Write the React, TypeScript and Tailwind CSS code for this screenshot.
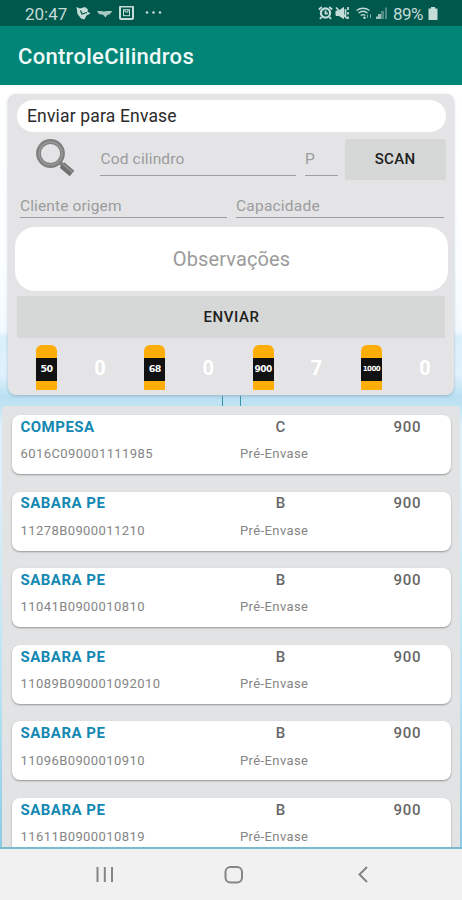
import React from "react";

type Cylinder = { size: string; count: number; label: string };
type Row = { client: string; code: string; type: string };

const cylinders: Cylinder[] = [
  { size: "50", count: 0, label: "text-[9.5px]" },
  { size: "68", count: 0, label: "text-[9.5px]" },
  { size: "900", count: 7, label: "text-[9px]" },
  { size: "1000", count: 0, label: "text-[7px]" },
];

const rows: Row[] = [
  { client: "COMPESA", code: "6016C090001111985", type: "C" },
  { client: "SABARA PE", code: "11278B0900011210", type: "B" },
  { client: "SABARA PE", code: "11041B0900010810", type: "B" },
  { client: "SABARA PE", code: "11089B090001092010", type: "B" },
  { client: "SABARA PE", code: "11096B0900010910", type: "B" },
  { client: "SABARA PE", code: "11611B0900010819", type: "B" },
];

function StatusBar() {
  return (
    <div className="flex h-[26px] shrink-0 items-center bg-[#00574b] pt-[2px] pl-[25px] text-[#c5dcd8]">
      <span className="w-[51px] text-[17px] leading-none whitespace-nowrap">20:47</span>
      <svg className="h-[16px] w-[87px]" viewBox="0 0 87 16" fill="none">
        <path d="M0.500 1 L4 2.500 L9 1 L12 3.500 L11.500 5.500 L14.500 7.500 L10.500 9.500 L8.500 13.500 L5 12.500 L1.500 8 Z" fill="#c5dcd8" />
        <path d="M4.500 4.500 L6 8 L11 6.500" stroke="#00574b" strokeWidth="1.2" />
        <path d="M21 5h4l3 .5l3 -.5h5.500l-3 3.500l-2 .3l-2 2.700l-2.500 -2.800l-4 -.8Z" fill="#c5dcd8" opacity=".85" />
        <rect x="44" y="0.500" width="13" height="12.500" rx="1" stroke="#c5dcd8" strokeWidth="2" />
        <rect x="47.500" y="3.700" width="6" height="6" stroke="#c5dcd8" strokeWidth="1" />
        <path d="M49 4v2h3V4" stroke="#c5dcd8" />
        <circle cx="71" cy="6.500" r="1.300" fill="#c5dcd8" />
        <circle cx="77.500" cy="6.500" r="1.300" fill="#c5dcd8" />
        <circle cx="84" cy="6.500" r="1.300" fill="#c5dcd8" />
      </svg>
      <svg className="ml-[155px] h-[16px] w-[71px]" viewBox="0 0 71 16" fill="none" stroke="#c5dcd8">
        <circle cx="7.500" cy="7" r="4.600" strokeWidth="2.200" />
        <path d="M7.500 4.500v3h2.300M0.800 3.500l3-2.500M11.200 1l3 2.500M3.500 11L2 13M11.500 11l1.500 2" strokeWidth="1.800" />
        <path d="M18 5h3l4.500-3.500v11l-4.500-3H18Z" fill="#c5dcd8" />
        <path d="M18 1.500l11 11M27.500 3v8M30 1v3M30 6v2.500M30 10.500v2.500" strokeWidth="1.700" />
        <path d="M38.500 4.500q6.500-4.500 13 0M40.500 7q4.500-3.500 9 0M42.700 9.500q2.300-1.700 4.600 0" strokeWidth="1.400" />
        <circle cx="46.500" cy="11.700" r="1.200" fill="#c5dcd8" stroke="none" />
        <path d="M49.500 12V8.500M52.500 8v4" strokeWidth="1.100" opacity=".6" />
        <path d="M58 13h2v-2.500h-2ZM60 13h3V8h-3Z" fill="#9dbfba" stroke="none" />
        <path d="M63 13h3V5h-3ZM67 13h2V1.500h-2Z" fill="#4f8c83" stroke="none" />
      </svg>
      <span className="ml-[4px] w-[34px] text-[17px] leading-none tracking-[-0.500px] whitespace-nowrap">89%</span>
      <svg className="ml-[1px] h-[14px] w-[10px]" viewBox="0 0 10 14">
        <path d="M3 0h4v1.500h2.500v11.500h-9V1.500H3Z" fill="#c5dcd8" />
      </svg>
    </div>
  );
}

function SearchIcon() {
  return (
    <svg className="ml-[28px] h-[40px] w-[40px]" viewBox="0 0 40 40" fill="none">
      <path d="M23 22.500L27 26.500" stroke="#808080" strokeWidth="4" />
      <path d="M26 26L36 34.500" stroke="#707070" strokeWidth="7" strokeLinejoin="round" />
      <path d="M27 25L36.500 33" stroke="#8e8e8e" strokeWidth="2" />
      <circle cx="14.500" cy="14.500" r="12" stroke="#808080" strokeWidth="4.800" />
      <circle cx="14.500" cy="14.500" r="11.400" stroke="#999" strokeWidth="1.500" />
    </svg>
  );
}

function Field({ label, className }: { label: string; className: string }) {
  return (
    <div className={`border-b-[1.5px] border-[#9d9fa0] text-[#9b9c9d] whitespace-nowrap ${className}`}>
      {label}
    </div>
  );
}

function CylinderIcon({ size, label }: { size: string; label: string }) {
  return (
    <div className="flex h-[45px] w-[21px] shrink-0 flex-col overflow-hidden rounded-t-[6px] rounded-b-[1px] bg-[#ffad08] pt-[13px]">
      <div
        className={`flex h-[23px] items-center justify-center bg-[#111] font-['DejaVu_Sans',sans-serif] font-bold tracking-[-0.500px] text-white ${label}`}
      >
        {size}
      </div>
    </div>
  );
}

function EnvasePanel() {
  return (
    <section className="mx-[8px] mt-[9px] h-[301px] shrink-0 rounded-[8px] bg-[#e4e4e6] pt-[6px] shadow-[0_1px_3px_rgba(70,100,120,0.35)]">
      <div className="mr-[8px] ml-[9px] flex h-[32px] items-center rounded-full bg-white pl-[10px] text-[17.500px] tracking-[0.170px] text-[#2a2a2a]">
        Enviar para Envase
      </div>
      <div className="mt-[7px] flex h-[41px]">
        <SearchIcon />
        <Field label="Cod cilindro" className="ml-[24px] h-[37px] w-[196px] pt-[9px] pl-[0.500px] text-[15.500px] leading-[22px] tracking-[0.150px]" />
        <Field label="P" className="ml-[9px] h-[37px] w-[33px] pt-[9px] text-[15.500px] leading-[22px]" />
        <button className="ml-[7px] h-[41px] w-[101px] rounded-[2px] bg-[#d6d8d7] pr-[1px] text-[15px] font-medium tracking-[0.300px] text-[#202020]">
          SCAN
        </button>
      </div>
      <div className="flex h-[47px] pl-[12px] text-[15.500px] leading-[22px]">
        <Field label="Cliente origem" className="h-[38px] w-[207px] pt-[15px] tracking-[0.120px]" />
        <Field label="Capacidade" className="ml-[9px] h-[38px] w-[208px] pt-[15px] tracking-[0.220px]" />
      </div>
      <div className="mr-[6px] ml-[7px] flex h-[64px] items-center justify-center rounded-[20px] bg-white text-[20px] tracking-[0.120px] text-[#9b9b9b]">
        Observações
      </div>
      <button className="mt-[5px] ml-[9px] block h-[42px] w-[428px] bg-[#d6d8d7] pl-[1px] text-[15px] font-medium tracking-[0.550px] text-[#202020]">
        ENVIAR
      </button>
      <div className="mt-[7px] flex pl-[28px]">
        {cylinders.map((c) => (
          <div key={c.size} className="flex w-[108.300px] shrink-0 items-center">
            <CylinderIcon size={c.size} label={c.label} />
            <span className="ml-[33px] w-[20px] text-center text-[20px] leading-none font-bold text-white">{c.count}</span>
          </div>
        ))}
      </div>
    </section>
  );
}

function CylinderCard({ row }: { row: Row }) {
  return (
    <article className="mb-[17.600px] h-[59px] shrink-0 rounded-[8px] bg-white px-[9px] pt-[2px] shadow-[0_1px_2px_rgba(0,0,0,0.35)]">
      <div className="flex h-[20px] items-center text-[15px] font-medium text-[#666]">
        <span className="w-[219px] font-bold tracking-[0.480px] text-[#1288b2]">{row.client}</span>
        <span className="w-[82px] text-center">{row.type}</span>
        <span className="ml-[72px] tracking-[0.700px]">900</span>
      </div>
      <div className="mt-[7px] flex h-[20px] items-center text-[13px] text-[#858585]">
        <span className="w-[219.500px] tracking-[0.420px]">{row.code}</span>
        <span className="w-[82px] tracking-[0.400px] whitespace-nowrap">Pré-Envase</span>
      </div>
    </article>
  );
}

function NavigationBar() {
  return (
    <nav className="flex h-[51px] shrink-0 items-center bg-[#f1f1f1]">
      <svg className="h-[51px] w-[462px]" viewBox="0 0 462 51" fill="none" stroke="#858585" strokeWidth="2">
        <path d="M97.500 18v15M104.800 18v15M112 18v15" />
        <rect x="225.500" y="18" width="16.500" height="15.500" rx="5" />
        <path d="M367 18L359.500 25.500L367 33" />
      </svg>
    </nav>
  );
}

export default function App() {
  return (
    <main className="flex h-[900px] w-[462px] flex-col overflow-hidden bg-white font-[Roboto,sans-serif]">
      <StatusBar />
      <header className="flex h-[59px] shrink-0 items-center bg-[#008577] pt-[2px] pl-[18px] text-[22px] font-medium tracking-[0.300px] text-[#f0faf8]">
        ControleCilindros
      </header>
      <div className="flex h-[764px] shrink-0 flex-col overflow-hidden border-b-2 border-[#7bb9cc] bg-[linear-gradient(to_bottom,#fff_0px,#fbfeff_180px,#f3faff_245px,#daf0fb_252px,#e0f2fc_290px,#b9e0f2_312px,#bfe4f4_321px,#dceffa_340px,#dceffa_400px,#b9e3f4_600px,#8bcbe3_764px)]">
        <EnvasePanel />
        <div className="flex h-[11px] shrink-0 items-end justify-center">
          <div className="h-[10px] w-[19px] border-x border-[#3a91aa]" />
        </div>
        <section className="mx-[2px] flex flex-1 flex-col overflow-hidden rounded-t-[4px] bg-[#e2e3e4] px-[9.500px] pt-[9px]">
          {rows.map((row) => (
            <CylinderCard key={row.code} row={row} />
          ))}
        </section>
      </div>
      <NavigationBar />
    </main>
  );
}
